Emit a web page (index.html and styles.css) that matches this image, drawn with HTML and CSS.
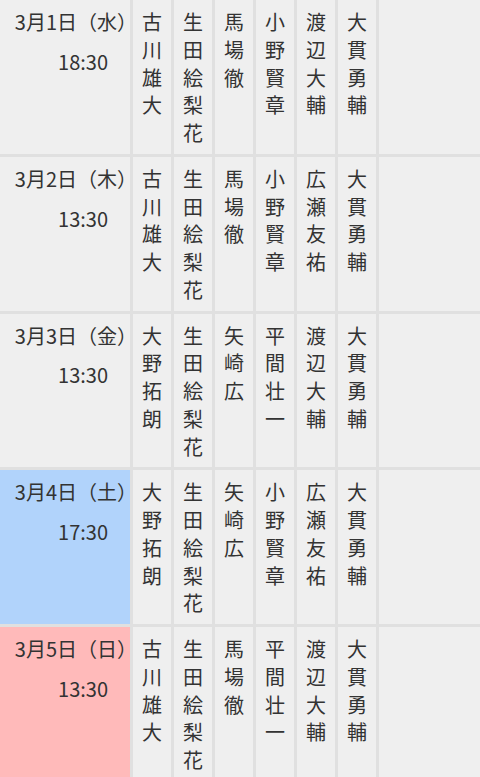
FILE: index.html
```html
<!DOCTYPE html>
<html lang="ja">
<head>
<meta charset="utf-8">
<title>公演スケジュール</title>
<link rel="stylesheet" href="styles.css">
</head>
<body>
<table class="schedule">
  <colgroup>
    <col class="c-date">
    <col class="c-name"><col class="c-name"><col class="c-name">
    <col class="c-name"><col class="c-name"><col class="c-name">
    <col class="c-rest">
  </colgroup>
  <tbody>
    <tr>
      <td class="date"><div class="day">3月1日（水<span class="close">）</span></div><div class="time">18:30</div></td>
      <td class="name">古川雄大</td>
      <td class="name">生田絵梨花</td>
      <td class="name">馬場徹</td>
      <td class="name">小野賢章</td>
      <td class="name">渡辺大輔</td>
      <td class="name">大貫勇輔</td>
      <td class="rest"></td>
    </tr>
    <tr>
      <td class="date"><div class="day">3月2日（木<span class="close">）</span></div><div class="time">13:30</div></td>
      <td class="name">古川雄大</td>
      <td class="name">生田絵梨花</td>
      <td class="name">馬場徹</td>
      <td class="name">小野賢章</td>
      <td class="name">広瀬友祐</td>
      <td class="name">大貫勇輔</td>
      <td class="rest"></td>
    </tr>
    <tr>
      <td class="date"><div class="day">3月3日（金<span class="close">）</span></div><div class="time">13:30</div></td>
      <td class="name">大野拓朗</td>
      <td class="name">生田絵梨花</td>
      <td class="name">矢崎広</td>
      <td class="name">平間壮一</td>
      <td class="name">渡辺大輔</td>
      <td class="name">大貫勇輔</td>
      <td class="rest"></td>
    </tr>
    <tr>
      <td class="date sat"><div class="day">3月4日（土<span class="close">）</span></div><div class="time">17:30</div></td>
      <td class="name">大野拓朗</td>
      <td class="name">生田絵梨花</td>
      <td class="name">矢崎広</td>
      <td class="name">小野賢章</td>
      <td class="name">広瀬友祐</td>
      <td class="name">大貫勇輔</td>
      <td class="rest"></td>
    </tr>
    <tr>
      <td class="date sun"><div class="day">3月5日（日<span class="close">）</span></div><div class="time">13:30</div></td>
      <td class="name">古川雄大</td>
      <td class="name">生田絵梨花</td>
      <td class="name">馬場徹</td>
      <td class="name">平間壮一</td>
      <td class="name">渡辺大輔</td>
      <td class="name">大貫勇輔</td>
      <td class="rest"></td>
    </tr>
  </tbody>
</table>
</body>
</html>
```

FILE: styles.css
```css
html, body {
  margin: 0;
  padding: 0;
  background: #efefef;
  overflow: hidden;
}

body {
  font-family: "Noto Sans CJK JP", "Noto Sans", sans-serif;
  font-size: 20px;
  line-height: 27.75px;
  color: #333333;
}

.schedule {
  table-layout: fixed;
  width: 492px;
  margin: -3px 0 0 -3px;
  border-collapse: separate;
  border-spacing: 3px;
  background: #e0e0e0;
}

.c-date { width: 130px; }
.c-name { width: 38px; }

.schedule td {
  background: #efefef;
  vertical-align: top;
  padding: 8px 0 7px;
}

.name {
  text-align: center;
  word-break: break-all;
}

.schedule td.name {
  padding: 8px 9px 7px;
}

.date {
  text-align: right;
}

.schedule td.date {
  padding: 8px 3px 7px 0;
}

.schedule td.sat { background: #b1d3fb; }
.schedule td.sun { background: #ffbaba; }

.day {
  white-space: nowrap;
}

.close {
  font-feature-settings: "halt";
}

.time {
  margin-top: 12px;
  padding-right: 19px;
}
```
